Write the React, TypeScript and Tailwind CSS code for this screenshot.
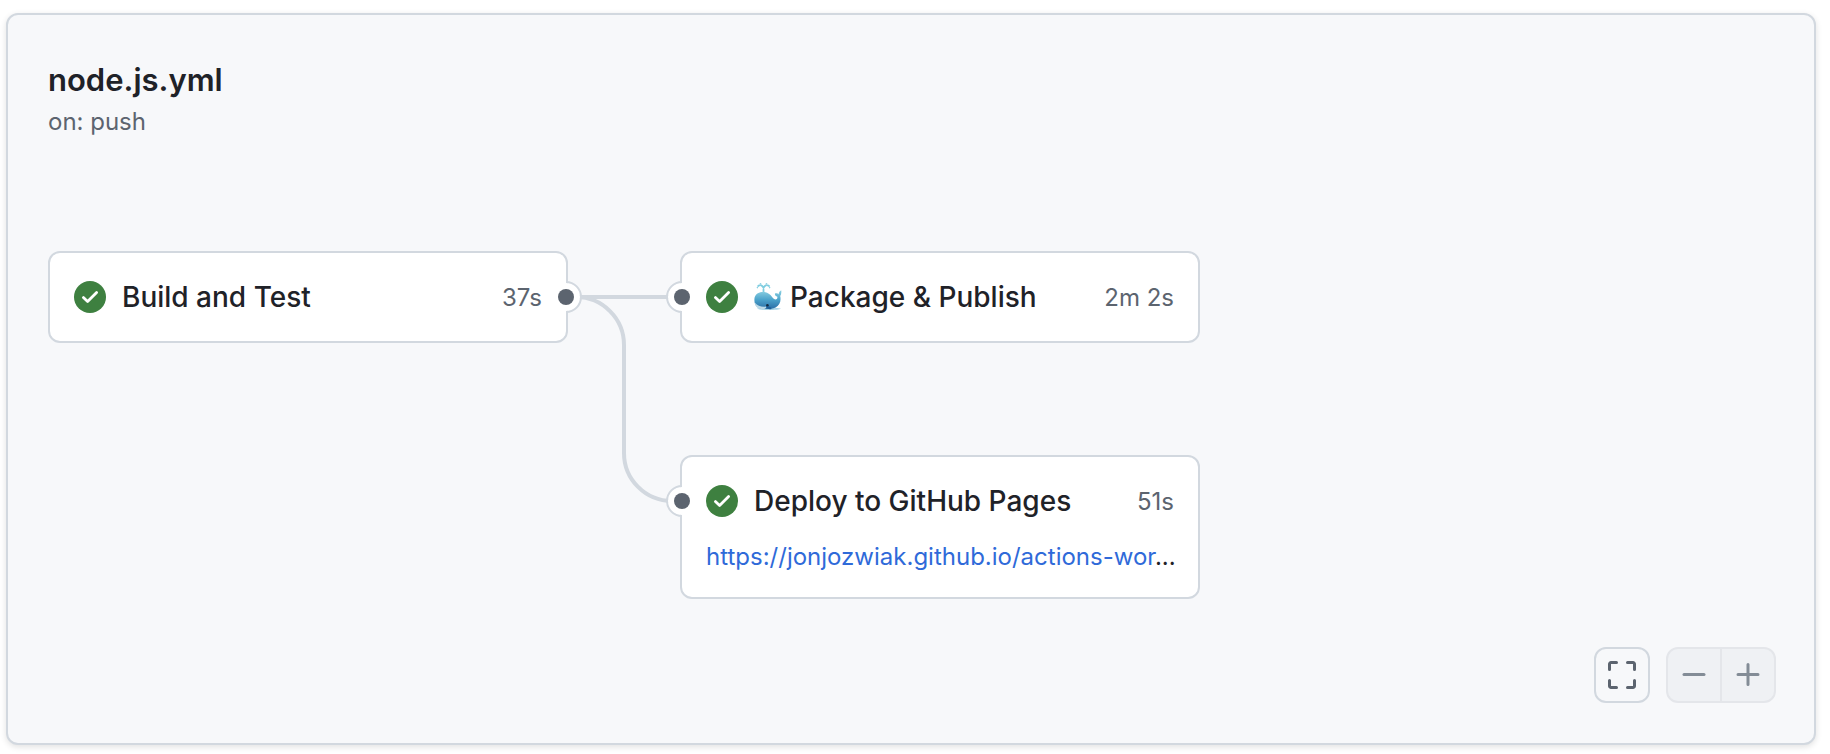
import type { ReactNode } from "react";

function CheckIcon() {
  return (
    <svg viewBox="0 0 32 32" className="size-8 shrink-0" role="img" aria-label="Succeeded">
      <circle cx="16" cy="16" r="16" fill="#3e8040" />
      <path
        d="M9.4 16.6 13.6 20.6 22.6 11.6"
        fill="none"
        stroke="#fff"
        strokeWidth="2.8"
        strokeLinecap="round"
        strokeLinejoin="round"
      />
    </svg>
  );
}

function WhaleIcon() {
  return (
    <svg viewBox="0 0 28 28" className="size-7 shrink-0" role="img" aria-label="Whale">
      <defs>
        <linearGradient id="whale-body" x1="0" y1="0" x2="0" y2="1">
          <stop offset="0" stopColor="#8fd3e3" />
          <stop offset="0.5" stopColor="#4ba3cb" />
          <stop offset="1" stopColor="#2a6da6" />
        </linearGradient>
      </defs>
      <path d="M3 25.5C7 24 22 24 27 25.5C25 27.5 6 27.8 3 25.5Z" fill="#a9d4e6" />
      <path
        d="M.6 14.5C2 9.8 7 8.3 11.5 9.2C16 10.200 17.5 13.5 19.8 15.8C21.8 17.2 23.6 16 23.4 13.8C21.600 13.4 20.6 11.8 21 10.4C22.8 10.200 24 10.600 24.6 11.4C24.8 9.4 25.800 7.800 27.2 7.2C27.600 9.5 27.2 11.5 26.2 13C27.4 18 25.5 22.500 21.5 24.5C17 26.4 8 26.8 4 24.5C.5 22.300 0 18 .6 14.5Z"
        fill="url(#whale-body)"
      />
      <path d="M.7 19.500C4 23.2 8 24.2 12 23.5C13 25 11 26.3 9 26.2C5 26.2 1.2 24.500 .7 19.500Z" fill="#bcd9e6" />
      <path d="M12 23.5C15 23 17 24 17.5 26C15 26.5 13 26 12 23.5Z" fill="#1f5f98" />
      <circle cx="13.4" cy="22.3" r="1.3" fill="#142c44" />
      <path
        d="M9.5 9V4M9 4C8 2.200 6 1.800 4.2 3M10 4C11 2.200 13.200 1.800 15 3"
        fill="none"
        stroke="#7fcde0"
        strokeWidth="1.8"
        strokeLinecap="round"
        strokeDasharray="2.5 1.8"
      />
      <circle cx="6.5" cy=".9" r=".9" fill="#8bd0e2" />
      <circle cx="12.5" cy=".9" r=".9" fill="#8bd0e2" />
      <circle cx="3.400" cy="4.600" r=".8" fill="#8bd0e2" />
      <circle cx="15.600" cy="4.600" r=".8" fill="#8bd0e2" />
    </svg>
  );
}

function Port({ side }: { side: "left" | "right" }) {
  return (
    <svg
      viewBox="0 0 32 32"
      className={
        side === "left"
          ? "absolute -left-4 top-7 size-8"
          : "absolute -right-4 top-7 size-8"
      }
      aria-hidden="true"
    >
      <circle cx="16" cy="16" r="14" fill="#fff" />
      <path
        d={side === "left" ? "M16 1A15 15 0 0 0 16 31" : "M16 1A15 15 0 0 1 16 31"}
        fill="none"
        stroke="#d2d8df"
        strokeWidth="2"
      />
      <circle cx="16" cy="16" r="8" fill="#5c646f" />
    </svg>
  );
}

type JobCardProps = {
  name: string;
  icon?: ReactNode;
  duration: string;
  port: "left" | "right";
  children?: ReactNode;
};

function JobCard({ name, icon, duration, port, children }: JobCardProps) {
  return (
    <article className="relative rounded-xl border-2 border-[#d2d8df] bg-white px-6 py-7">
      <div className="flex h-8 items-center">
        <CheckIcon />
        <h3 className="ml-4 flex min-w-0 flex-1 items-center gap-2 whitespace-nowrap text-[28px] font-medium text-[#1f2228]">
          {icon}
          {name}
        </h3>
        <span className="pt-0.5 text-2xl text-[#5c646f]">{duration}</span>
      </div>
      {children}
      <Port side={port} />
    </article>
  );
}

function Connectors() {
  return (
    <svg viewBox="0 0 112 260" className="h-[260px] w-28 shrink-0" aria-hidden="true">
      <g fill="none" stroke="#d2d8df" strokeWidth="4">
        <path d="M0 46H112" />
        <path d="M8 46A48 48 0 0 1 56 94V202A48 48 0 0 0 104 250" />
      </g>
    </svg>
  );
}

export default function App() {
  return (
    <main className="bg-white pt-[13px] pr-[14px] pb-[9px] pl-[6px] font-['Inter',sans-serif]">
      <section className="rounded-xl border-2 border-[#d2d8df] bg-[#f7f8fa] pt-[45px] pr-[38px] pb-10 pl-10 shadow-[0_2px_6px_rgba(0,0,0,0.12)]">
        <header>
          <h2 className="text-[31px] leading-10 font-semibold text-[#1f2228]">node.js.yml</h2>
          <p className="mt-1 text-2xl leading-9 text-[#5c646f]">on: push</p>
        </header>

        <div className="mt-[111px] flex items-start">
          <div className="w-[520px]">
            <JobCard name="Build and Test" duration="37s" port="right" />
          </div>
          <Connectors />
          <div className="flex w-[520px] flex-col gap-28">
            <JobCard name="Package & Publish" icon={<WhaleIcon />} duration="2m 2s" port="left" />
            <JobCard name="Deploy to GitHub Pages" duration="51s" port="left">
              <p className="mt-6 -mr-3 -mb-1 text-2xl leading-8 whitespace-nowrap text-[#1f2228]">
                <a href="https://jonjozwiak.github.io/" className="text-[#2f6ad9]">
                  https://jonjozwiak.github.io/actions-wor
                </a>
                ...
              </p>
            </JobCard>
          </div>
        </div>

        <div className="mt-12 flex justify-end gap-4">
          <button
            type="button"
            aria-label="Fit to window"
            className="flex size-14 items-center justify-center rounded-xl border-2 border-[#d2d8df] bg-[#f7f8fa] text-[#5c646f]"
          >
            <svg viewBox="0 0 28 28" className="size-7" fill="none" stroke="currentColor" strokeWidth="3" strokeLinecap="round" strokeLinejoin="round">
              <path d="M1.5 8.5V3A1.5 1.5 0 0 1 3 1.5H8.5M19.5 1.5H25A1.5 1.5 0 0 1 26.5 3V8.5M26.5 19.5V25A1.5 1.5 0 0 1 25 26.5H19.5M8.5 26.5H3A1.5 1.5 0 0 1 1.5 25V19.5" />
            </svg>
          </button>
          <div className="flex h-14 overflow-hidden rounded-xl border-2 border-[#e4e6ea] bg-[#eff1f4] text-[#838c96]">
            <button type="button" aria-label="Zoom out" disabled className="flex w-[54px] items-center justify-center border-r-2 border-[#e4e6ea]">
              <svg viewBox="0 0 24 24" className="size-6" fill="none" stroke="currentColor" strokeWidth="3" strokeLinecap="round">
                <path d="M2 11.500H22" />
              </svg>
            </button>
            <button type="button" aria-label="Zoom in" disabled className="flex w-[52px] items-center justify-center">
              <svg viewBox="0 0 24 24" className="size-6" fill="none" stroke="currentColor" strokeWidth="3" strokeLinecap="round">
                <path d="M2 11.500H22M12 1.500V21.500" />
              </svg>
            </button>
          </div>
        </div>
      </section>
    </main>
  );
}
